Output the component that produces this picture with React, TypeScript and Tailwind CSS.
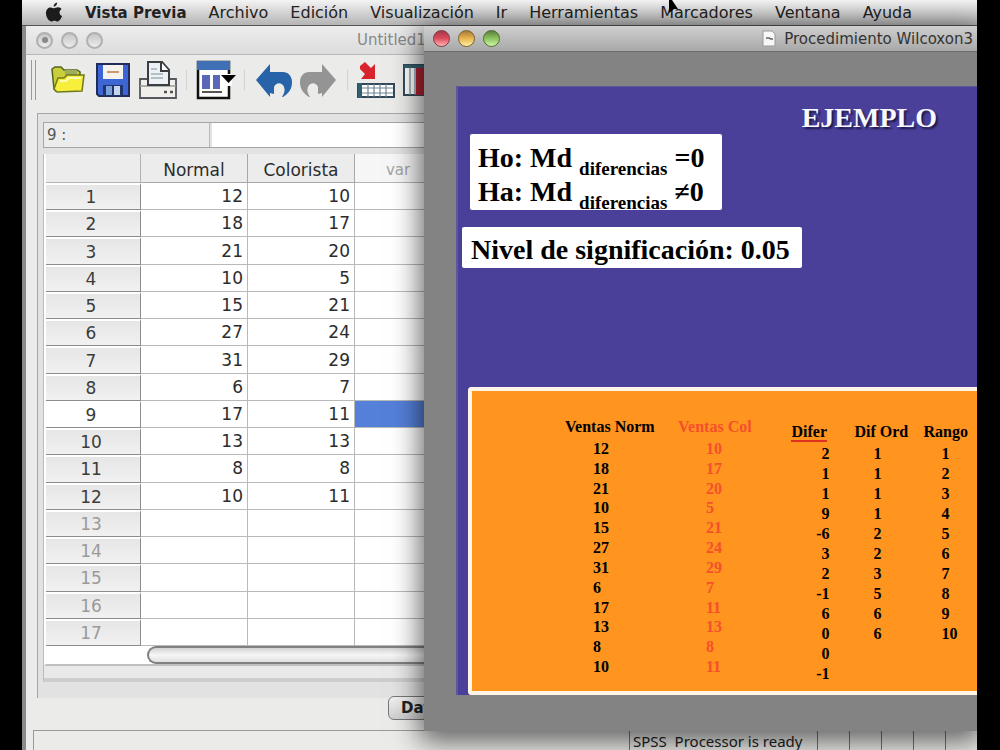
import React from "react";

const menus = [
  "Archivo",
  "Edición",
  "Visualización",
  "Ir",
  "Herramientas",
  "Marcadores",
  "Ventana",
  "Ayuda",
];

const normal = [12, 18, 21, 10, 15, 27, 31, 6, 17, 13, 8, 10];
const colorista = [10, 17, 20, 5, 21, 24, 29, 7, 11, 13, 8, 11];
const difer = [2, 1, 1, 9, -6, 3, 2, -1, 6, 0, 0, -1];
const difOrd = [1, 1, 1, 1, 2, 2, 3, 5, 6, 6];
const rango = [1, 2, 3, 4, 5, 6, 7, 8, 9, 10];
const rows = Array.from({ length: 17 }, (_, i) => i);
const ACTIVE_ROW = 8;

function AppleLogo() {
  return (
    <svg viewBox="0 0 20 24" className="h-[21px] w-[18px]" fill="#1c1c1c" aria-hidden="true">
      <path d="M13.6 0.6c.2 2-1.400 4.500-4 4.700C9.300 3.200 11.300.9 13.600.6z" />
      <path d="M18.600 8.200c-3.300 2-2.900 6.300.6 7.900-.9 2.700-2.900 6-4.900 6.100-1.400 0-2-.9-3.800-.9s-2.500.9-3.800.9C3.800 22.200.8 17 .8 12.700c0-4.200 2.700-6.500 5.400-6.500 1.600 0 3 1 4 1 .9 0 2.600-1.200 4.700-1.100 1.500.1 2.900.8 3.700 2.100z" />
    </svg>
  );
}

function MenuBar() {
  return (
    <nav
      aria-label="Menú"
      className="flex h-[26px] shrink-0 items-center gap-[22px] overflow-hidden whitespace-nowrap border-b border-[#555] bg-gradient-to-b from-[#f4f4f4] to-[#b4b4b4] pl-[23px] text-base leading-5 text-[#222]"
    >
      <button aria-label="Apple">
        <AppleLogo />
      </button>
      <button className="text-[15px] font-bold">Vista Previa</button>
      {menus.map((m) => (
        <button key={m}>{m}</button>
      ))}
    </nav>
  );
}

function OpenIcon() {
  return (
    <svg viewBox="0 0 36 30" className="h-[30px] w-9" aria-hidden="true">
      <path d="M2 4l3-2h6l3 3h13l3 2v7l-24 12-2-2z" fill="#c9cf3c" stroke="#55641c" strokeWidth="1.500" />
      <path d="M15 5h12v5H15z" fill="#9fae5a" />
      <path d="M8 13h6l3-3h17l-2 16-25 1-3-3z" fill="#f8ee3c" stroke="#6f7a1c" strokeWidth="1.500" />
      <path d="M10 16h6l3-3h12" fill="none" stroke="#fffbb0" strokeWidth="2" />
    </svg>
  );
}

function SaveIcon() {
  return (
    <svg viewBox="0 0 34 34" className="size-[34px]" aria-hidden="true">
      <path d="M1 1h32v32H3l-2-2z" fill="#3d66d4" stroke="#222c58" strokeWidth="2" />
      <rect x="7" y="2" width="20" height="14" fill="#f6f2ee" />
      <path d="M11 9h12" stroke="#c89a6e" strokeWidth="2" />
      <rect x="7" y="22" width="20" height="11" fill="#22346c" />
      <rect x="10" y="23" width="6" height="9" fill="#7aa0dc" />
      <rect x="18" y="23" width="6" height="9" fill="#c4d6ee" />
    </svg>
  );
}

function PrintIcon() {
  return (
    <svg viewBox="0 0 40 40" className="size-10" aria-hidden="true">
      <path d="M2 19h36v19H2z" fill="#f0efec" stroke="#55585c" strokeWidth="1.800" />
      <path d="M2 26h36" stroke="#9a9a98" strokeWidth="1.500" />
      <path d="M10 2h14l7 8v15H10z" fill="#eef1f3" stroke="#3a3d42" strokeWidth="2" />
      <path d="M23 2v9h8" fill="#fff" stroke="#3a3d42" strokeWidth="2" />
      <path d="M13 9h6M13 14h12M13 18h12" stroke="#9fb0bb" strokeWidth="1.500" />
      <path d="M26 32h3M32 32h3" stroke="#55524c" strokeWidth="2.500" />
    </svg>
  );
}

function DialogRecallIcon() {
  return (
    <svg viewBox="0 0 40 40" className="size-10" aria-hidden="true">
      <path d="M2 2h31v36H2z" fill="#fdfdfd" stroke="#111" strokeWidth="2.500" />
      <path d="M1 1h33v9H1z" fill="#3f6fb4" />
      <path d="M6 15h8v14H6zM17 15h7v14h-7z" fill="#5a66b8" />
      <path d="M6 32h20" stroke="#555" strokeWidth="2" />
      <path d="M31 14h5v12h-5z" fill="#fdfdfd" />
      <path d="M25 15h15l-7.500 8z" fill="#000" />
    </svg>
  );
}

const arrow = "M1 17L15 1v8h13c5 0 9 4 9 10 0 7-3 11-9 15h-1c3-5 3-7 2-10-2-5-8-5-10 0v7l-4-1v4z";

function UndoIcon() {
  return (
    <svg viewBox="0 0 38 34" className="h-[34px] w-[38px]" aria-hidden="true">
      <path d={arrow} fill="#2763a8" />
    </svg>
  );
}

function RedoIcon() {
  return (
    <svg viewBox="0 0 38 34" className="h-[34px] w-[38px]" aria-hidden="true">
      <path d={arrow} fill="#949494" transform="translate(38 0) scale(-1 1)" />
    </svg>
  );
}

function GotoCaseIcon() {
  return (
    <svg viewBox="0 0 38 36" className="h-9 w-[38px]" aria-hidden="true">
      <path d="M3 4l5-4 6 6 4-4v15H4l4-5-5-5z" fill="#d8242c" />
      <path d="M1 22h36v13H1z" fill="#fff" stroke="#33495a" strokeWidth="2" />
      <path d="M1 21h4v15H1z" fill="#33606e" />
      <path d="M5 26h31M5 31h31M11 22v13M17 22v13M23 22v13M29 22v13" stroke="#718795" strokeWidth="1.200" />
    </svg>
  );
}

function GotoVariableIcon() {
  return (
    <svg viewBox="0 0 34 32" className="h-8 w-[34px]" aria-hidden="true">
      <path d="M1 1h32v30H1z" fill="#fff" stroke="#33495a" strokeWidth="2" />
      <path d="M1 1h32v3H1z" fill="#33606e" />
      <path d="M13 4h8v27h-8z" fill="#b02434" />
      <path d="M7 4v27M12 4v27" stroke="#718795" strokeWidth="1.200" />
    </svg>
  );
}

function Cursor() {
  return (
    <svg viewBox="0 0 10 15" className="absolute left-[646px] top-0 h-[15px] w-[10px]" aria-hidden="true">
      <path d="M1 0h3l6 9-4 0-5 4z" fill="#000" />
    </svg>
  );
}

function Toolbar() {
  return (
    <div className="flex h-[49px] shrink-0 items-center pl-[5px]">
      <span className="mr-[14px] h-10 w-[5px] border-x border-[#999]" />
      <button aria-label="Abrir" className="mr-[10px]"><OpenIcon /></button>
      <button aria-label="Guardar" className="mr-2"><SaveIcon /></button>
      <button aria-label="Imprimir" className="mr-2"><PrintIcon /></button>
      <span className="mr-[9px] h-5 w-px bg-[#d2d2d2]" />
      <button aria-label="Diálogos recientes" className="mr-2"><DialogRecallIcon /></button>
      <span className="mr-[10px] h-5 w-px bg-[#d2d2d2]" />
      <button aria-label="Deshacer" className="mr-[6px]"><UndoIcon /></button>
      <button aria-label="Rehacer" className="mr-[10px]"><RedoIcon /></button>
      <span className="mr-[9px] h-5 w-px bg-[#d2d2d2]" />
      <button aria-label="Ir a caso" className="mr-2"><GotoCaseIcon /></button>
      <button aria-label="Ir a variable"><GotoVariableIcon /></button>
    </div>
  );
}

function GreyLight({ dot = false }: { dot?: boolean }) {
  return (
    <span className="flex size-[17px] items-center justify-center rounded-full border-2 border-[#b0b0b0] bg-gradient-to-b from-[#c6c6c6] to-[#ececec]">
      {dot && <span className="size-[6px] rounded-full bg-[#888]" />}
    </span>
  );
}

function Sheet() {
  return (
    <table className="h-[492px] w-full table-fixed border-separate border-spacing-0 text-[17px] leading-5 text-[#2c2c2c]">
      <colgroup>
        <col className="w-[95px]" />
        <col className="w-[107px]" />
        <col className="w-[107px]" />
        <col className="w-[86px]" />
        <col />
      </colgroup>
      <thead>
        <tr className="h-[29px] bg-[#ececec]">
          <td className="border-b border-r border-[#b4b4b4]" />
          <th className="border-b border-r border-[#a8a8a8] p-0 pt-1 font-normal">Normal</th>
          <th className="border-b border-r border-[#a8a8a8] p-0 pt-1 font-normal">Colorista</th>
          <th className="border-b border-[#b4b4b4] bg-[#f6f6f6] p-0 pt-1 text-[15px] font-normal text-[#a4a4a4]">var</th>
          <td className="border-b border-[#b4b4b4]" />
        </tr>
      </thead>
      <tbody>
        {rows.map((i) => (
          <tr key={i}>
            <th
              scope="row"
              className={
                "border-b border-r border-t-2 border-b-[#8c8c8c] border-r-[#8c8c8c] border-t-white p-0 pr-1 font-normal " +
                (i === ACTIVE_ROW ? "bg-white " : "bg-gradient-to-b from-[#e6e6e6] to-[#f1f1f1] ") +
                (i > 11 ? "text-[#9a9a9a]" : "text-[#3c3c3c]")
              }
            >
              {i + 1}
            </th>
            <td className="border-b border-r border-[#b9b9b9] p-0 pr-1 text-right">{normal[i]}</td>
            <td className="border-b border-r border-[#b9b9b9] p-0 pr-1 text-right">{colorista[i]}</td>
            <td className={"border-b border-[#b9b9b9] " + (i === ACTIVE_ROW ? "bg-[#5580da]" : "")} />
            <td className="border-b border-[#b9b9b9]" />
          </tr>
        ))}
      </tbody>
    </table>
  );
}

function SpssWindow() {
  return (
    <section className="flex min-h-0 flex-1 flex-col border-l-4 border-[#8a8a8a] bg-[#ebebea]">
      <header className="flex h-[29px] shrink-0 items-center gap-2 border-b border-[#b8b8b8] bg-gradient-to-b from-[#ededed] to-[#dcdcdc] pl-[10px]">
        <GreyLight dot />
        <GreyLight />
        <GreyLight />
        <h2 className="ml-[246px] text-[15px] leading-5 text-[#888]">Untitled1</h2>
      </header>
      <Toolbar />
      <div className="ml-[11px] mt-[9px] flex shrink-0 flex-col border-l border-t border-[#a6a6a6] bg-[#e2e2e2] pb-4">
        <div className="ml-[5px] mt-2 flex h-[26px] border-y border-l border-[#a6a6a6]">
          <div className="w-[166px] border-r border-[#bbb] bg-[#ebeceb] pl-[3px] text-[15px] leading-6 text-[#555]">9 :</div>
          <input aria-label="Valor de la celda" className="ml-[2px] min-w-0 flex-1 bg-white outline-none" />
        </div>
        <div className="ml-[5px] mt-[6px] border-b-4 border-l border-b-[#cdcdcd] border-l-[#bbb] bg-[#e9e9e9] pb-3">
          <div className="border-b-2 border-l-2 border-b-[#c0c0c0] border-l-white bg-white">
            <Sheet />
            <div className="ml-[101px] h-[18px] rounded-l-full border-2 border-r-0 border-[#808080] bg-gradient-to-b from-[#d4d4d4] via-[#f6f6f6] to-[#e0e0e0]" />
          </div>
        </div>
      </div>
      <div className="flex h-8 shrink-0 pl-[362px]">
        <button className="-mt-[2px] h-6 rounded-md border border-[#777] bg-gradient-to-b from-[#f2f2f2] to-[#cfcfcf] px-3 text-[15px] font-bold leading-5 text-[#222]">
          Data View
        </button>
      </div>
      <footer className="ml-[7px] flex min-h-5 flex-1 items-stretch justify-end border-l border-t border-[#999] text-[15px] leading-5 text-[#222]">
        <span className="w-[188px] whitespace-nowrap border-l border-[#777] pl-[3px] font-['Noto_Sans',sans-serif]">SPSS&nbsp; Processor is ready</span>
        {rows.slice(0, 5).map((i) => (
          <span key={i} className="w-8 border-l border-[#777]" />
        ))}
      </footer>
    </section>
  );
}

function LeftData() {
  return (
    <table className="h-[262px] w-[200px] table-fixed whitespace-nowrap text-left text-base leading-[18px]">
      <thead>
        <tr className="h-6">
          <th className="w-[113px] p-0">Ventas Norm</th>
          <th className="p-0 text-[#f4502c]">Ventas Col</th>
        </tr>
      </thead>
      <tbody>
        {normal.map((n, i) => (
          <tr key={i}>
            <td className="p-0 pl-7">{n}</td>
            <td className="p-0 pl-7 text-[#f4502c]">{colorista[i]}</td>
          </tr>
        ))}
      </tbody>
    </table>
  );
}

function RightData() {
  return (
    <table className="mt-[5px] h-[264px] w-[186px] table-fixed whitespace-nowrap text-left text-base leading-[18px]">
      <thead>
        <tr className="h-6">
          <th className="w-[63px] p-0">
            <span className="border-b-2 border-[#e03020]">Difer</span>
          </th>
          <th className="w-[69px] p-0">Dif Ord</th>
          <th className="p-0">Rango</th>
        </tr>
      </thead>
      <tbody>
        {difer.map((d, i) => (
          <tr key={i}>
            <td className="p-0 pr-[25px] text-right">{d}</td>
            <td className="p-0 pl-[19px]">{difOrd[i]}</td>
            <td className="p-0 pl-[18px]">{rango[i]}</td>
          </tr>
        ))}
      </tbody>
    </table>
  );
}

function PreviewWindow() {
  return (
    <section className="absolute left-[402px] right-0 top-[26px] bg-[#838383] pb-9 shadow-[0_6px_26px_4px_rgba(0,0,0,0.6)]">
      <header className="flex h-[26px] items-center gap-2 border-b border-[#6c6c6c] bg-gradient-to-b from-[#cfcfcf] to-[#a9a9a9] pl-[9px] pr-1">
        <button aria-label="Cerrar" className="size-[17px] rounded-full border border-[#7a3a40] bg-gradient-to-b from-[#a83848] via-[#dd4a5c] to-[#ffb4b8]" />
        <button aria-label="Minimizar" className="size-[17px] rounded-full border border-[#7a6030] bg-gradient-to-b from-[#a87c38] via-[#e8b44c] to-[#fff0a0]" />
        <button aria-label="Ampliar" className="size-[17px] rounded-full border border-[#4c6a34] bg-gradient-to-b from-[#5c8040] via-[#8cc45c] to-[#d0f4a8]" />
        <span className="flex flex-1 items-center justify-end gap-2">
          <svg viewBox="0 0 14 17" className="h-[17px] w-[14px]" aria-hidden="true">
            <path d="M1 1h9l3 3v12H1z" fill="#f7f7f7" stroke="#999" />
            <path d="M4 8h3l2 1h2" fill="none" stroke="#666" strokeWidth="1.500" />
          </svg>
          <h1 className="whitespace-nowrap text-[15px] leading-5 text-[#333]">Procedimiento Wilcoxon3</h1>
        </span>
      </header>
      <div className="ml-8 mt-[34px] flex flex-col items-start border-l-2 border-t border-[#5c589c] bg-[#4a409a] font-['Liberation_Serif',serif] font-bold text-black">
        <h2 className="mr-10 mt-4 self-end text-[28px] leading-[30px] text-[#f8f8ff] [text-shadow:2px_2px_2px_#1c1848]">EJEMPLO</h2>
        <div className="ml-3 mt-px rounded-[2px] bg-white pb-px pl-2 pr-[18px] pt-[7px] text-[28px] leading-[34px]">
          <p>Ho: Md <span className="relative top-2 text-[19px] leading-none">diferencias</span> =0</p>
          <p>Ha: Md <span className="relative top-2 text-[19px] leading-none">diferencias</span> ≠0</p>
        </div>
        <p className="ml-1 mt-[17px] rounded-[2px] bg-white pb-px pl-[9px] pr-3 pt-[6px] text-[28px] leading-[34px]">Nivel de significación: 0.05</p>
        <div className="ml-[10px] mt-[119px] flex items-start gap-[27px] self-stretch overflow-hidden rounded-l-[4px] border-y-4 border-l-4 border-[#fff4e6] bg-[#ff941f] pb-[7px] pl-[93px] pt-6">
          <LeftData />
          <RightData />
        </div>
      </div>
    </section>
  );
}

export default function App() {
  return (
    <div className="min-h-screen bg-black pl-[22px] pr-[23px] font-['DejaVu_Sans',sans-serif]">
      <main className="relative flex min-h-screen flex-col overflow-hidden">
        <MenuBar />
        <SpssWindow />
        <PreviewWindow />
        <Cursor />
      </main>
    </div>
  );
}
